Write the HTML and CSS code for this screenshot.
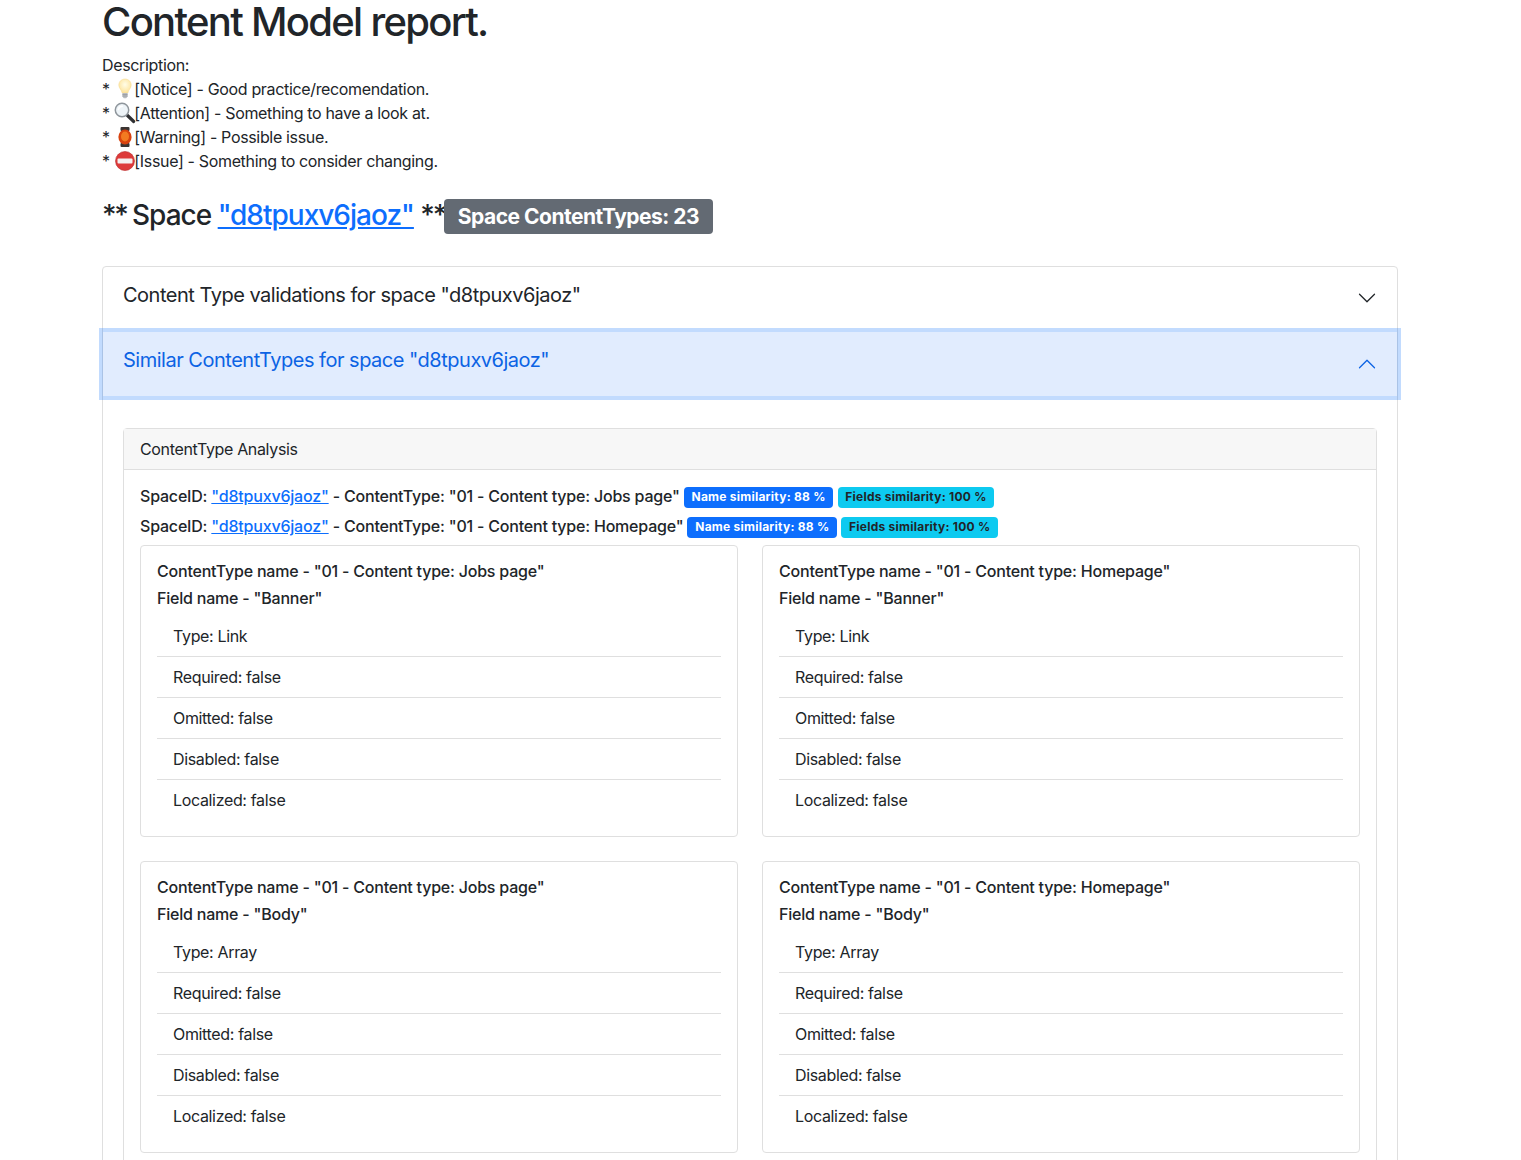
FILE: index.html
```html
<!DOCTYPE html>
<html lang="en">
<head>
  <meta charset="UTF-8">
  <meta name="viewport" content="width=device-width, initial-scale=1.0">
  <title>Content Model report</title>
  <link rel="stylesheet" href="styles.css">
</head>
<body>
  <div class="container">
    <h1>Content Model report.</h1>
    <p class="legend">
      Description:<br>
      * <svg class="emoji" viewBox="0 0 22 22"><defs><radialGradient id="bulb" cx=".5" cy=".4" r=".6"><stop offset="0" stop-color="#fffde8"/><stop offset="1" stop-color="#fde39a"/></radialGradient></defs><path d="M11 1c-3.500 0-6.200 2.600-6.200 6 0 3.200 2.700 4.700 3.300 8h5.800c.6-3.300 3.300-4.800 3.300-8 0-3.400-2.700-6-6.200-6z" fill="url(#bulb)" stroke="#f5d98e" stroke-width=".5"/><path d="M8.400 15h5.200v3.500l-1.400 1.700h-2.400l-1.400-1.700z" fill="#b9bcc0"/><path d="M8.400 16.500h5.200M8.400 18h5.200" stroke="#8b8e93" stroke-width=".6"/></svg>[Notice] - Good practice/recomendation.<br>
      * <svg class="emoji" viewBox="0 0 22 22"><path d="M13.500 13.500l6.200 6" stroke="#2f3033" stroke-width="3.200" stroke-linecap="round"/><circle cx="8" cy="8" r="6.700" fill="#eef4f8" stroke="#8f969c" stroke-width="1.500"/><path d="M4.300 7.500c.5-2 2-3.200 4-3.300" fill="none" stroke="#fff" stroke-width="1.500" stroke-linecap="round"/></svg>[Attention] - Something to have a look at.<br>
      * <svg class="emoji" viewBox="0 0 22 22"><rect x="6.500" y="1" width="9" height="4" rx="1" fill="#3b3533"/><rect x="6.500" y="17" width="9" height="4" rx="1" fill="#3b3533"/><ellipse cx="11" cy="11" rx="6.600" ry="7.500" fill="#d8430f"/><ellipse cx="11" cy="10.500" rx="4" ry="5" fill="#f27a21"/></svg>[Warning] - Possible issue.<br>
      * <svg class="emoji" viewBox="0 0 22 22"><circle cx="11" cy="11" r="9.500" fill="#dd3a3a" stroke="#b82a2a" stroke-width=".6"/><rect x="3.500" y="8.500" width="15" height="5" rx="1" fill="#f4f0f0"/></svg>[Issue] - Something to consider changing.
    </p>
    <h3 class="space-title"><span class="stars">** </span>Space <a href="#">"d8tpuxv6jaoz"</a> <span class="stars">**</span><span class="badge badge-grey">Space ContentTypes: 23</span></h3>

    <div class="accordion">
      <div class="accordion-header">
        <span>Content Type validations for space "d8tpuxv6jaoz"</span>
        <svg class="chevron" viewBox="0 0 16 16"><path fill="#212529" d="M1.646 4.646a.5.5 0 0 1 .708 0L8 10.293l5.646-5.647a.5.5 0 0 1 .708.708l-6 6a.5.5 0 0 1-.708 0l-6-6a.5.5 0 0 1 0-.708z"/></svg>
      </div>
      <div class="accordion-header open">
        <span>Similar ContentTypes for space "d8tpuxv6jaoz"</span>
        <svg class="chevron flip" viewBox="0 0 16 16"><path fill="#0c63e4" d="M1.646 4.646a.5.5 0 0 1 .708 0L8 10.293l5.646-5.647a.5.5 0 0 1 .708.708l-6 6a.5.5 0 0 1-.708 0l-6-6a.5.5 0 0 1 0-.708z"/></svg>
      </div>
      <div class="accordion-body">
        <div class="card">
          <div class="card-header">ContentType Analysis</div>
          <div class="card-body">
            <div class="match">SpaceID: <a href="#">"d8tpuxv6jaoz"</a> - ContentType: "01 - Content type: Jobs page" <span class="badge badge-blue">Name similarity: 88 %</span> <span class="badge badge-cyan">Fields similarity: 100 %</span></div>
            <div class="match">SpaceID: <a href="#">"d8tpuxv6jaoz"</a> - ContentType: "01 - Content type: Homepage" <span class="badge badge-blue">Name similarity: 88 %</span> <span class="badge badge-cyan">Fields similarity: 100 %</span></div>

            <div class="compare">
              <div class="field-card">
                <h6>ContentType name - "01 - Content type: Jobs page"</h6>
                <h6>Field name - "Banner"</h6>
                <ul class="list">
                  <li>Type: Link</li>
                  <li>Required: false</li>
                  <li>Omitted: false</li>
                  <li>Disabled: false</li>
                  <li>Localized: false</li>
                </ul>
              </div>
              <div class="field-card">
                <h6>ContentType name - "01 - Content type: Homepage"</h6>
                <h6>Field name - "Banner"</h6>
                <ul class="list">
                  <li>Type: Link</li>
                  <li>Required: false</li>
                  <li>Omitted: false</li>
                  <li>Disabled: false</li>
                  <li>Localized: false</li>
                </ul>
              </div>
              <div class="field-card">
                <h6>ContentType name - "01 - Content type: Jobs page"</h6>
                <h6>Field name - "Body"</h6>
                <ul class="list">
                  <li>Type: Array</li>
                  <li>Required: false</li>
                  <li>Omitted: false</li>
                  <li>Disabled: false</li>
                  <li>Localized: false</li>
                </ul>
              </div>
              <div class="field-card">
                <h6>ContentType name - "01 - Content type: Homepage"</h6>
                <h6>Field name - "Body"</h6>
                <ul class="list">
                  <li>Type: Array</li>
                  <li>Required: false</li>
                  <li>Omitted: false</li>
                  <li>Disabled: false</li>
                  <li>Localized: false</li>
                </ul>
              </div>
            </div>
          </div>
        </div>
      </div>
    </div>
  </div>
</body>
</html>
```

FILE: styles.css
```css
html, body {
  height: 1160px;
  overflow: hidden;
}
body {
  margin: 0;
  background-color: #fff;
  color: #212529;
  font-family: Inter, "Liberation Sans", sans-serif;
  font-size: 16px;
  line-height: 24px;
  letter-spacing: -.34px;
}
a {
  color: #0d6efd;
}
.container {
  width: 1296px;
  margin-left: 102px;
}
h1 {
  margin: 0 0 8px;
  font-size: 40px;
  font-weight: 500;
  line-height: 44px;
  height: 45px;
  letter-spacing: -1.7px;
}
.legend {
  margin: 0 0 25px;
}
.emoji {
  width: 22px;
  height: 22px;
  margin-right: -1.5px;
  vertical-align: -5px;
}
.space-title {
  margin: 0 0 32px;
  font-size: 28px;
  font-weight: 500;
  line-height: 34px;
  letter-spacing: -1px;
}
.stars {
  letter-spacing: -2.2px;
}
.badge {
  display: inline-block;
  font-size: .75em;
  font-weight: 700;
  line-height: 1;
  color: #fff;
  padding: .35em .65em;
  border-radius: 4px;
  vertical-align: 1px;
  letter-spacing: -.5px;
}
.badge-grey {
  margin-left: -1px;
  background-color: #636a73;
}
.badge-blue {
  background-color: #0d6efd;
}
.badge-cyan {
  background-color: #0dcaf0;
  color: #212529;
}
.accordion {
  border: 1px solid #dfdfdf;
  border-radius: 4px 4px 0 0;
}
.accordion-header {
  display: flex;
  align-items: center;
  justify-content: space-between;
  padding: 16px 20px;
  margin-bottom: 3px;
  font-size: 20px;
  line-height: 30px;
  height: 62px;
  box-sizing: border-box;
  letter-spacing: -.49px;
}
.accordion-header span {
  padding-bottom: 6px;
}
.accordion-header.open {
  height: 64px;
  margin-bottom: 0;
  color: #0c63e4;
  background-color: #e1ecfe;
  box-shadow: 0 0 0 4px rgba(13, 110, 253, .25);
}
.accordion-header.open span {
  padding-bottom: 8px;
}
.chevron {
  width: 20px;
  height: 20px;
}
.flip {
  transform: rotate(180deg);
}
.accordion-body {
  padding: 32px 20px 16px;
}
.card {
  border: 1px solid #dfdfdf;
  border-radius: 4px;
}
.card-header {
  padding: 8px 16px;
  background-color: #f7f7f7;
  border-bottom: 1px solid #dfdfdf;
}
.card-body {
  padding: 11px 16px 16px;
}
.match {
  line-height: 30px;
  white-space: nowrap;
  font-weight: 500;
  letter-spacing: -.2px;
}
.match .badge {
  letter-spacing: .24px;
}
.compare {
  display: grid;
  grid-template-columns: 1fr 1fr;
  gap: 24px;
  margin-top: 4px;
}
.field-card {
  border: 1px solid #dfdfdf;
  border-radius: 4px;
  padding: 16px;
}
h6 {
  margin: 0 0 8px;
  font-size: 16px;
  font-weight: 500;
  line-height: 19px;
  letter-spacing: -.21px;
}
.list {
  margin: 0;
  padding: 0;
  list-style: none;
}
.list li {
  padding: 8px 16px;
  border-bottom: 1px solid #dfdfdf;
}
.list li:last-child {
  border-bottom: 0;
}
```
